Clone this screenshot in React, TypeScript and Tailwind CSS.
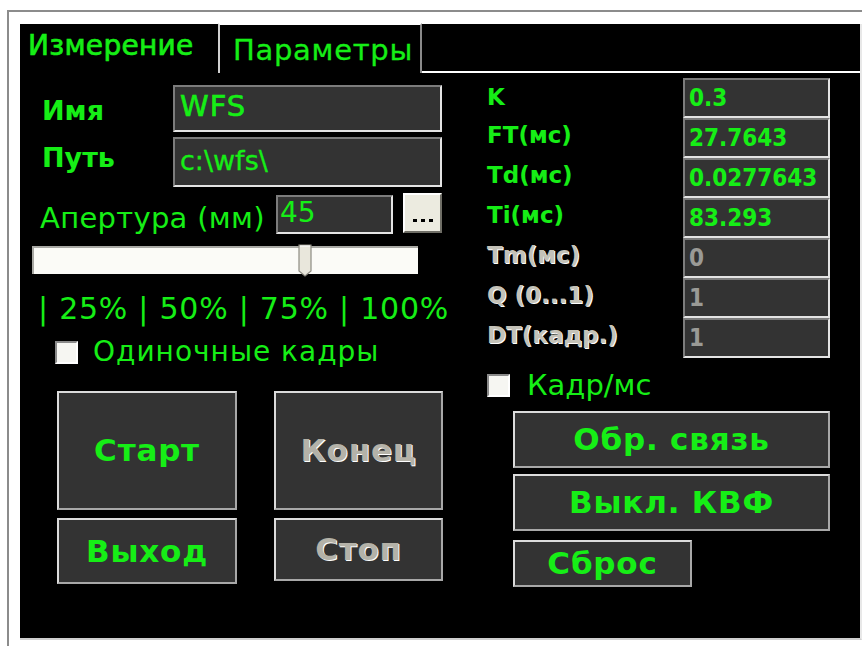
import React from "react";

const font = "font-['DejaVu_Sans',sans-serif]";
const cond = "font-['DejaVu_Sans_Condensed','DejaVu_Sans',sans-serif]";

function SunkenField({
  className,
  children,
}: {
  className: string;
  children?: React.ReactNode;
}) {
  return (
    <div
      className={
        "flex items-center bg-[#333333] border-2 border-t-[#7c7c7c] border-l-[#7c7c7c] border-b-[#e4e4e4] border-r-[#e4e4e4] " +
        className
      }
    >
      {children}
    </div>
  );
}

function DarkButton({
  className,
  children,
  disabled,
}: {
  className: string;
  children: React.ReactNode;
  disabled?: boolean;
}) {
  return (
    <div
      className={
        "flex items-center justify-center bg-[#333333] border-2 border-t-[#dcdcdc] border-l-[#dcdcdc] border-b-[#a8a8a8] border-r-[#a8a8a8] font-bold text-[31px] tracking-[0.8px] " +
        (disabled
          ? "text-[#b4b2a8] [text-shadow:1px_1px_0_#ffffff] "
          : "text-[#16ee16] ") +
        className
      }
    >
      {children}
    </div>
  );
}

function CheckBox() {
  return (
    <div className="w-[23px] h-[23px] shrink-0 bg-[#f6f6f2] border-2 border-t-[#8a8a8a] border-l-[#8a8a8a] border-b-[#ffffff] border-r-[#ffffff]" />
  );
}

const params: { label: string; value: string; on: boolean }[] = [
  { label: "K", value: "0.3", on: true },
  { label: "FT(мс)", value: "27.7643", on: true },
  { label: "Td(мс)", value: "0.0277643", on: true },
  { label: "Ti(мс)", value: "83.293", on: true },
  { label: "Tm(мс)", value: "0", on: false },
  { label: "Q (0...1)", value: "1", on: false },
  { label: "DT(кадр.)", value: "1", on: false },
];

export default function App() {
  return (
    <div className={"w-[862px] h-[646px] bg-white overflow-hidden " + font}>
      <div className="ml-[7px] mt-[10px] h-[636px] border-l-2 border-t-2 border-[#8c8c8c] pl-[11px] pt-[12px]">
        <div className="w-[842px] h-[616px] bg-black border-r-2 border-b-2 border-r-[#e8e8e8] border-b-[#cfcfcf] flex flex-col text-[#16ee16]">
          {/* tab strip */}
          <div className="flex h-[49px] shrink-0">
            <div className="w-[198px] pl-[8px] pt-[6px] text-[28px] leading-[32px] tracking-[0.3px] [-webkit-text-stroke:0.7px_#16ee16]">
              Измерение
            </div>
            <div className="w-[204px] h-[50px] -mt-[1px] border-t-2 border-l-2 border-r-2 border-t-white border-l-[#d0d0d0] border-r-[#8a8a8a] pl-[13px] pt-[8px] text-[29px] leading-[34px] tracking-[0.7px] [-webkit-text-stroke:0.3px_#16ee16]">
              Параметры
            </div>
            <div className="flex-1 border-b-2 border-white" />
          </div>

          <div className="flex">
            {/* left column */}
            <div className="w-[447px] flex flex-col">
              <div className="flex items-center mt-[12px]">
                <div className="w-[153px] pl-[22px] text-[27px] font-bold pt-[6px]">Имя</div>
                <SunkenField className="w-[269px] h-[47px] pl-[5px] text-[29px] pb-[4px] tracking-[1px] [-webkit-text-stroke:0.6px_#16ee16]">
                  WFS
                </SunkenField>
              </div>
              <div className="flex items-center mt-[5px]">
                <div className="w-[153px] pl-[22px] text-[27px] font-bold pb-[8px]">Путь</div>
                <SunkenField className="w-[269px] h-[50px] pl-[5px] text-[27px] pb-[2px] [-webkit-text-stroke:0.3px_#16ee16]">
                  c:\wfs\
                </SunkenField>
              </div>
              <div className="flex items-start mt-[6px]">
                <div className="w-[256px] pl-[20px] text-[29px] leading-[34px] pt-[8px] tracking-[0.3px] whitespace-nowrap">
                  Апертура (мм)
                </div>
                <SunkenField className="w-[117px] h-[39px] mt-[2px] pl-[2px] text-[28px] pb-[4px]">
                  45
                </SunkenField>
                <div className="ml-[10px] w-[39px] h-[40px] bg-[#ecebe0] border-2 border-t-white border-l-white border-b-[#6f6e66] border-r-[#6f6e66] flex items-end justify-center pb-[9px] gap-[4px]">
                  <span className="w-[4px] h-[3px] bg-black" />
                  <span className="w-[4px] h-[3px] bg-black" />
                  <span className="w-[4px] h-[3px] bg-black" />
                </div>
              </div>
              {/* aperture slider */}
              <div className="relative ml-[12px] mt-[11px] w-[386px] h-[28px] bg-[#fbfbf7] border-t-2 border-l-2 border-[#a9a9a4]">
                <svg
                  className="absolute left-[264px] -top-[4px]"
                  width="14"
                  height="33"
                  viewBox="0 0 14 33"
                >
                  <path d="M1 1 H13 V27 L7 32 L1 27 Z" fill="#e9e7dc" stroke="#8d8b82" strokeWidth="1.2" />
                  <path d="M2 2 H12" stroke="#ffffff" strokeWidth="1" />
                </svg>
              </div>
              <div className="ml-[18px] mt-[19px] text-[30px] leading-[32px] tracking-[0.75px] whitespace-nowrap">
                | 25% | 50% | 75% | 100%
              </div>
              <div className="flex items-center ml-[35px] mt-[12px]">
                <CheckBox />
                <span className="ml-[15px] text-[28px] leading-[30px] tracking-[1px]">Одиночные кадры</span>
              </div>
              <div className="ml-[37px] mt-[24px] grid grid-cols-[180px_169px] gap-x-[37px] gap-y-[8px]">
                <DarkButton className="h-[119px]">Старт</DarkButton>
                <DarkButton className="h-[119px]" disabled>
                  Конец
                </DarkButton>
                <DarkButton className="h-[66px]">Выход</DarkButton>
                <DarkButton className="h-[63px]" disabled>
                  Стоп
                </DarkButton>
              </div>
            </div>

            {/* right column */}
            <div className="ml-[20px] flex flex-col">
              <div className="mt-[5px] flex flex-col">
                {params.map((p, i) => (
                  <div key={p.label} className="flex items-center h-[40px]">
                    <div
                      className={
                        "w-[196px] text-[23px] font-bold whitespace-nowrap " +
                        (i === 0 ? "pb-[2px] " : "pb-[6px] ") +
                        (p.on ? "text-[#16ee16]" : "text-[#c4c2b8] [text-shadow:1px_1px_0_#ffffff]")
                      }
                    >
                      {p.label}
                    </div>
                    <SunkenField
                      className={
                        "w-[147px] h-[40px] pl-[4px] text-[24px] font-bold " +
                        cond +
                        (p.on ? " text-[#16ee16]" : " text-[#9a9a96]")
                      }
                    >
                      {p.value}
                    </SunkenField>
                  </div>
                ))}
              </div>
              <div className="flex items-center mt-[12px]">
                <CheckBox />
                <span className="ml-[17px] text-[29px] leading-[30px]">Кадр/мс</span>
              </div>
              <DarkButton className="ml-[26px] mt-[11px] w-[317px] h-[57px]">Обр. связь</DarkButton>
              <DarkButton className="ml-[26px] mt-[6px] w-[317px] h-[57px]">Выкл. КВФ</DarkButton>
              <DarkButton className="ml-[26px] mt-[9px] w-[179px] h-[47px]">Сброс</DarkButton>
            </div>
          </div>
        </div>
      </div>
    </div>
  );
}
